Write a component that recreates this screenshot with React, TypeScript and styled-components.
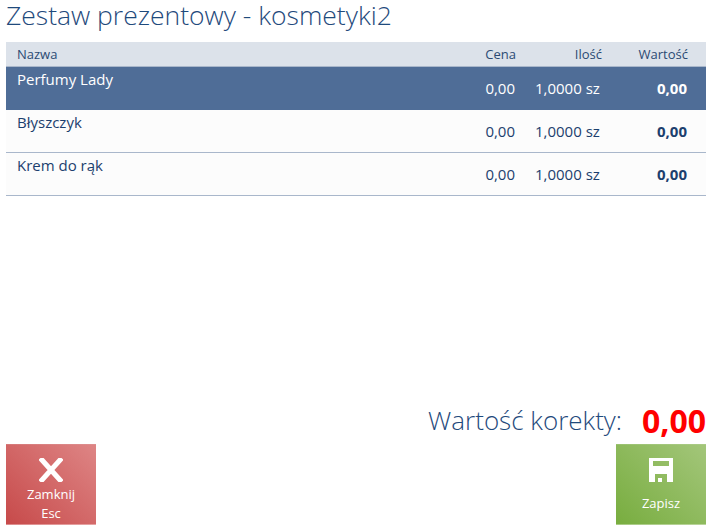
import React from 'react';
import styled, { createGlobalStyle } from 'styled-components';

const GlobalStyle = createGlobalStyle`
  html, body {
    margin: 0;
    padding: 0;
    background: #fff;
    font-family: "Open Sans", "Noto Sans", sans-serif;
  }
`;

const Page = styled.div`
  width: 711px;
  height: 532px;
  box-sizing: border-box;
  padding: 0 5px 7px 6px;
  display: flex;
  flex-direction: column;
  overflow: hidden;
`;

const Title = styled.h1`
  margin: 0;
  height: 42px;
  line-height: 30px;
  font-size: 26.5px;
  font-weight: 300;
  color: #1f4a7c;
  white-space: nowrap;
`;

const Grid = styled.div`
  display: grid;
  grid-template-columns: 1fr 70px 86px 86px;
`;

const HeaderRow = styled(Grid)`
  height: 24px;
  background: #dce2ea;
  border-bottom: 1px solid #a9b7cb;
  align-items: end;
  font-size: 13px;
  line-height: 20px;
  color: #2b4a73;
`;

const HeaderCell = styled.div<{ $right?: boolean }>`
  padding: 0 ${p => (p.$right ? '18px' : '0')} 2px 11px;
  text-align: ${p => (p.$right ? 'right' : 'left')};
`;

const Row = styled(Grid)<{ $selected?: boolean }>`
  height: ${p => (p.$selected ? '43px' : '42px')};
  background: ${p => (p.$selected ? '#4f6d97' : '#fcfcfc')};
  border-bottom: ${p => (p.$selected ? 'none' : '1px solid #a9b7cb')};
  color: ${p => (p.$selected ? '#fff' : '#1c3f6e')};
  font-size: 15px;
`;

const NameCell = styled.div`
  padding: 2px 0 0 11px;
  line-height: 20px;
`;

const NumCell = styled.div<{ $bold?: boolean }>`
  padding: 11px 19px 0 0;
  line-height: 20px;
  text-align: right;
  font-weight: ${p => (p.$bold ? 700 : 400)};
  white-space: nowrap;
`;

// the unit is cut by the edge of its cell, as in the original grid
const QtyCell = styled.div`
  margin: 11px 20px 0 1px;
  height: 20px;
  line-height: 20px;
  overflow: hidden;
  white-space: nowrap;
`;

const Spacer = styled.div`
  flex: 1;
`;

const Summary = styled.div`
  height: 48px;
  display: flex;
  justify-content: flex-end;
  align-items: center;
  gap: 20px;
`;

const SummaryLabel = styled.span`
  font-size: 26px;
  font-weight: 300;
  color: #1f4a7c;
`;

const SummaryValue = styled.span`
  font-size: 32px;
  font-weight: 700;
  color: #ff0000;
`;

const Footer = styled.div`
  display: flex;
  justify-content: space-between;
`;

const ActionButton = styled.button<{ $from: string; $to: string }>`
  width: 90px;
  height: 81px;
  padding: 0;
  border: none;
  border-top: 1px solid rgba(255, 255, 255, 0.25);
  border-bottom: 1px solid rgba(255, 255, 255, 0.25);
  background: linear-gradient(45deg, ${p => p.$from}, ${p => p.$to});
  color: #fff;
  font-family: inherit;
  font-size: 13px;
  line-height: 19px;
  display: flex;
  flex-direction: column;
  align-items: center;
`;

const IconSlot = styled.div`
  height: 37px;
  flex: none;
  display: flex;
  align-items: flex-end;
  justify-content: center;
`;

const Caption = styled.div<{ $offset: number }>`
  margin-top: ${p => p.$offset}px;
`;

const rows = [
  { name: 'Perfumy Lady', selected: true },
  { name: 'Błyszczyk' },
  { name: 'Krem do rąk' },
];

export default function App() {
  return (
    <>
      <GlobalStyle />
      <Page>
        <Title>Zestaw prezentowy - kosmetyki2</Title>
        <HeaderRow>
          <HeaderCell>Nazwa</HeaderCell>
          <HeaderCell $right>Cena</HeaderCell>
          <HeaderCell $right>Ilość</HeaderCell>
          <HeaderCell $right>Wartość</HeaderCell>
        </HeaderRow>
        {rows.map(r => (
          <Row key={r.name} $selected={r.selected}>
            <NameCell>{r.name}</NameCell>
            <NumCell>0,00</NumCell>
            <QtyCell>1,0000 sz</QtyCell>
            <NumCell $bold>0,00</NumCell>
          </Row>
        ))}
        <Spacer />
        <Summary>
          <SummaryLabel>Wartość korekty:</SummaryLabel>
          <SummaryValue>0,00</SummaryValue>
        </Summary>
        <Footer>
          <ActionButton $from="#c74a4a" $to="#de8585">
            <IconSlot>
              <svg width="24" height="24" viewBox="0 0 24 24">
                <path d="M3 2 L21 22 M21 2 L3 22" stroke="#fff" strokeWidth="5" strokeLinecap="square" fill="none" />
              </svg>
            </IconSlot>
            <Caption $offset={3}>Zamknij</Caption>
            <Caption $offset={0}>Esc</Caption>
          </ActionButton>
          <ActionButton $from="#78ad3f" $to="#a3c67a">
            <IconSlot>
              <svg width="24" height="24" viewBox="0 0 24 24">
                <path
                  fillRule="evenodd"
                  d="M0 0 H24 V24 H18 V16 H6 V24 H0 Z M4 3 V8 H20 V3 Z M9 20 H13 V24 H9 Z"
                  fill="#fff"
                />
              </svg>
            </IconSlot>
            <Caption $offset={12}>Zapisz</Caption>
          </ActionButton>
        </Footer>
      </Page>
    </>
  );
}
